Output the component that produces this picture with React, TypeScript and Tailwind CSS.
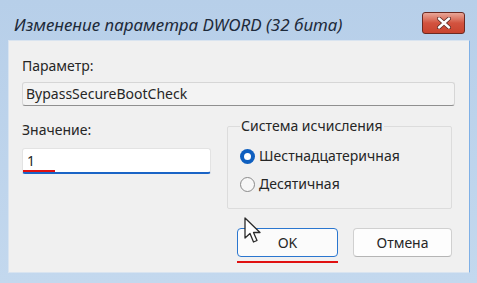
export default function App() {
  return (
    <div
      className="relative w-[477px] h-[283px] overflow-hidden bg-gradient-to-b from-[#b7cfe9] to-[#c3d8ee] pl-[8px] pr-[7px] pb-[10px] flex flex-col"
      style={{ fontFamily: '"Noto Sans", "Open Sans", sans-serif' }}
    >
      {/* Title bar */}
      <div className="h-[40px] shrink-0 flex items-start justify-between">
        <div className="pt-[14px] pl-[6px] text-[17px] italic leading-[22px] text-[#1d2a3a]">
          Изменение параметра DWORD (32 бита)
        </div>
        <div className="mt-[12px] mr-[5px] w-[43px] h-[22px] rounded-[3px] border border-[#6b2a22] bg-gradient-to-b from-[#e8a698] via-[#d2533f] to-[#c9432e] flex items-center justify-center">
          <svg width="14" height="12" viewBox="0 0 14 12">
            <path d="M2 1.5 L12 10.5 M12 1.5 L2 10.5" stroke="#5a2a24" strokeWidth="4" strokeLinecap="round" />
            <path d="M2 1.5 L12 10.5 M12 1.5 L2 10.5" stroke="#ffffff" strokeWidth="2.4" strokeLinecap="round" />
          </svg>
        </div>
      </div>

      {/* Client area */}
      <div className="flex-1 bg-[#f0f0f0] border border-[#d9e4f0] border-r-[#7fb0e6] flex flex-col pl-[13px] pr-[17px] pt-[15px] text-[14px] text-[#262626]">
        <div className="leading-[20px]">Параметр:</div>
        <div className="mt-[6px] h-[24px] w-[433px] border border-[#d6d6d6] border-b-[#8f8f8f] rounded-[3px] bg-[#f3f3f3] px-[3px] leading-[22px]">
          BypassSecureBootCheck
        </div>

        <div className="mt-[12px] flex gap-[16px]">
          <div className="w-[191px] flex flex-col">
            <div className="mt-[2px] leading-[20px]">Значение:</div>
            <div className="mt-[8px] h-[26px] bg-white border border-[#e3e3e3] border-b-2 border-b-[#1a64c6] rounded-[3px] flex items-center">
              <span className="inline-block w-[32px] border-b-2 border-b-[#e01010] leading-[18px] pl-[4px] mt-[2px]">1</span>
            </div>
          </div>

          <fieldset className="w-[227px] h-[91px] border border-[#dcdcdc] rounded-[2px] px-[12px] pt-[8px]">
            <legend className="px-[1px] leading-[16px]">Система исчисления</legend>
            <label className="flex items-center gap-[4px] h-[28px]">
              <span className="w-[15px] h-[15px] rounded-full bg-[#0f5fbf] flex items-center justify-center">
                <span className="w-[7px] h-[7px] rounded-full bg-white" />
              </span>
              <span className="leading-[20px]">Шестнадцатеричная</span>
            </label>
            <label className="flex items-center gap-[4px] h-[28px]">
              <span className="w-[15px] h-[15px] rounded-full border border-[#8a8a8a] bg-[#f7f7f7]" />
              <span className="leading-[20px]">Десятичная</span>
            </label>
          </fieldset>
        </div>

        <div className="mt-[19px] flex justify-end gap-[15px]">
          <div className="flex flex-col">
            <div className="w-[101px] h-[29px] rounded-[4px] border border-[#2a76cf] bg-[#fbfbfb] flex items-center justify-center">
              OK
            </div>
            <div className="mt-[4px] h-[2px] bg-[#e01010]" />
          </div>
          <div className="w-[99px] h-[29px] rounded-[4px] border border-[#d0d0d0] border-b-[#b5b5b5] bg-[#fdfdfd] flex items-center justify-center">
            Отмена
          </div>
        </div>
      </div>

      {/* Mouse cursor */}
      <svg className="absolute left-[244px] top-[217px]" width="20" height="27" viewBox="0 0 20 27">
        <path d="M1 1 L1 21 L6 16.5 L9.5 25 L13 23.5 L9.5 15.5 L16 15.5 Z" fill="#ffffff" stroke="#2a2a2a" strokeWidth="1.3" strokeLinejoin="round" />
      </svg>
    </div>
  );
}
